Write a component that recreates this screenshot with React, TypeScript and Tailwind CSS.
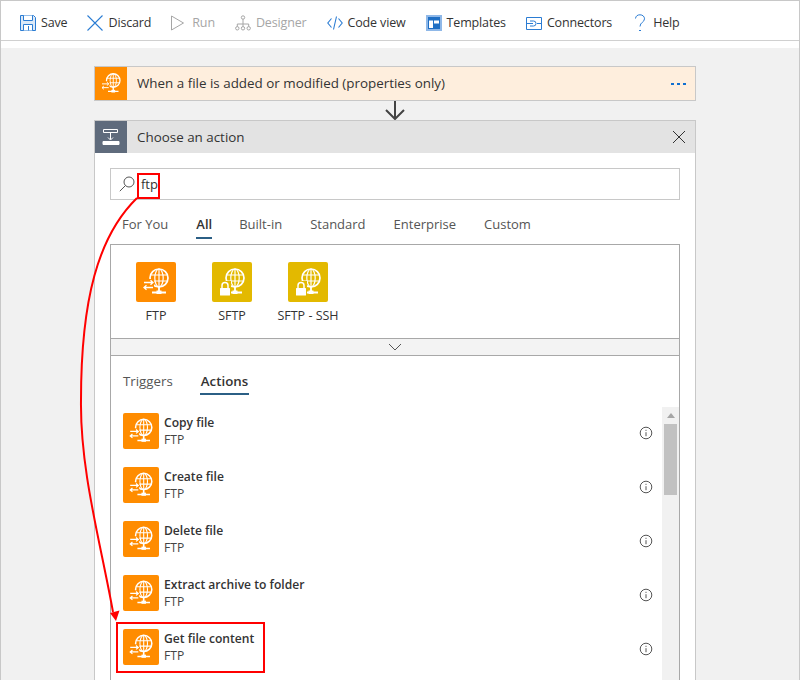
import { ReactNode } from 'react';

const actions = ['Copy file', 'Create file', 'Delete file', 'Extract archive to folder', 'Get file content'];

function Globe({ lock, bg = '#ff8c00' }: { lock?: boolean; bg?: string }) {
  return (
    <svg viewBox="0 0 40 40" className="w-full h-full" fill="none" stroke="#fff" strokeWidth={1.2}>
      <circle cx="23" cy="16" r="9" strokeWidth={1.7} />
      <ellipse cx="23" cy="16" rx="4.2" ry="9" />
      <path d="M23 7v18M14.500 13h17M14.500 19h17" />
      <path d="M23 25v4M16 30.500h14" strokeWidth={1.8} />
      <rect x="20.500" y="28.500" width="5" height="3.500" fill="#fff" stroke="none" />
      {lock ? (
        <g>
          <rect x="7" y="19" width="12" height="15" fill={bg} stroke="none" />
          <path d="M10 26v-2.500a3 3 0 0 1 6 0V26" strokeWidth={1.500} />
          <rect x="8" y="26" width="10" height="7.500" rx="0.5" fill="#fff" stroke="none" />
        </g>
      ) : (
        <g strokeWidth={1.300}>
          <rect x="6.500" y="17" width="11.500" height="11" fill={bg} stroke="none" />
          <path d="M8 20.500h9M14.500 18.300l2.500 2.200-2.500 2.200" />
          <path d="M17 25.500H8M10.500 23.300L8 25.500l2.500 2.200" />
        </g>
      )}
    </svg>
  );
}

function ToolItem({ icon, label, muted }: { icon: ReactNode; label: string; muted?: boolean }) {
  return (
    <div className={`flex items-center gap-[5px] ${muted ? 'text-[#a6a6a6]' : 'text-[#333]'}`}>
      {icon}
      <span>{label}</span>
    </div>
  );
}

function InfoIcon() {
  return (
    <svg viewBox="0 0 14 14" className="w-[14px] h-[14px]" fill="none" stroke="#555" strokeWidth={1}>
      <circle cx="7" cy="7" r="5.800" />
      <path d="M7 6.200v4M7 3.800v1.100" />
    </svg>
  );
}

export default function App() {
  return (
    <div className="relative w-[800px] h-[680px] overflow-hidden bg-[#f1f1f1] border-x border-[#c8c8c8] text-[13px] font-['Open_Sans','Noto_Sans',sans-serif] text-[#333]">
      <div className="bg-white h-[48px] border-t border-[#c8c8c8]">
        <div className="h-[40px] border-b border-[#d0d0d0] flex items-center pl-[19px] pt-[5px] gap-[20px] text-[12.500px] tracking-[-0.15px]">
          <ToolItem
            label="Save"
            icon={
              <svg viewBox="0 0 16 16" className="w-[16px] h-[16px]" fill="#dbe9f8" stroke="#2b7cd3" strokeWidth={1}>
                <path d="M.5.5h13l2 2v13H.5z" />
                <path d="M3.500.5v5h9v-5M3.500 15.500v-6h9v6" fill="#fff" />
                <path d="M8.500 11v4.500" />
              </svg>
            }
          />
          <ToolItem
            label="Discard"
            icon={
              <svg viewBox="0 0 16 16" className="w-[16px] h-[16px]" fill="none" stroke="#2b7cd3" strokeWidth={1.100}>
                <path d="M.5.5l15 15M15.500.5l-15 15" />
              </svg>
            }
          />
          <ToolItem
            muted
            label="Run"
            icon={
              <svg viewBox="0 0 16 16" className="w-[16px] h-[16px]" fill="none" stroke="#a6a6a6" strokeWidth={1}>
                <path d="M.5 1l12 7-12 7z" />
              </svg>
            }
          />
          <ToolItem
            muted
            label="Designer"
            icon={
              <svg viewBox="0 0 16 16" className="w-[16px] h-[16px]" fill="none" stroke="#a6a6a6" strokeWidth={1}>
                <circle cx="8" cy="2.500" r="1.700" />
                <circle cx="2.300" cy="13.300" r="1.700" />
                <circle cx="8" cy="13.300" r="1.700" />
                <circle cx="13.700" cy="13.300" r="1.700" />
                <path d="M8 4.200v7.400M2.300 11.600V9h11.400v2.600" />
              </svg>
            }
          />
          <ToolItem
            label="Code view"
            icon={
              <svg viewBox="0 0 16 14" className="w-[16px] h-[14px]" fill="none" stroke="#2b7cd3" strokeWidth={1.100}>
                <path d="M4.500 2.500L.8 7l3.700 4.500M11.500 2.500L15.200 7l-3.700 4.500M9.500.5l-3 13" />
              </svg>
            }
          />
          <ToolItem
            label="Templates"
            icon={
              <svg viewBox="0 0 16 16" className="w-[16px] h-[16px]">
                <rect width="16" height="16" fill="#8fb8e8" />
                <rect x="2" y="2" width="12" height="12" fill="#1f6fc4" />
                <rect x="3" y="5.500" width="4" height="7.500" fill="#fff" />
                <rect x="8" y="5.500" width="5" height="3" fill="#fff" />
              </svg>
            }
          />
          <ToolItem
            label="Connectors"
            icon={
              <svg viewBox="0 0 16 13" className="w-[16px] h-[13px]" fill="none" stroke="#2b7cd3" strokeWidth={1}>
                <path d="M.5.5h15v12H.5z" />
                <path d="M4 4h3.500a2.500 2.500 0 0 1 0 5H4M0 6.500h7M11 6.500h5" />
              </svg>
            }
          />
          <ToolItem
            label="Help"
            icon={
              <svg viewBox="0 0 16 18" className="w-[16px] h-[18px]" fill="none" stroke="#2b7cd3" strokeWidth={1}>
                <path d="M3.500 4.500C3.800 2 5.500.8 8 .8c2.700 0 4.500 1.700 4.500 4 0 3.500-4.500 3.500-4.500 7.700" />
                <path d="M7 16.500h2" />
              </svg>
            }
          />
        </div>
      </div>

      <div className="w-[602px] ml-[93px] mt-[18px]">
        <div className="h-[35px] flex items-center bg-[#feeedd] border border-[#c8c8c8]">
          <div className="w-[32px] h-[33px] bg-[#ff8c00] p-[1px] shrink-0">
            <Globe />
          </div>
          <span className="ml-[10px] text-[13.400px]">When a file is added or modified (properties only)</span>
          <div className="ml-auto mr-[9px] flex gap-[3px]">
            <i className="w-[3px] h-[2px] bg-[#0f6fd0]" />
            <i className="w-[3px] h-[2px] bg-[#0f6fd0]" />
            <i className="w-[3px] h-[2px] bg-[#0f6fd0]" />
          </div>
        </div>

        <div className="h-[19px] flex justify-center">
          <svg viewBox="0 0 22 19" className="w-[22px] h-[19px]" fill="none" stroke="#444" strokeWidth={2}>
            <path d="M11 0v17M2 9l9 9 9-9" />
          </svg>
        </div>

        <div className="bg-white border border-[#c8c8c8] h-[600px]">
          <div className="h-[32px] bg-[#e3e3e3] flex items-center">
            <div className="w-[32px] h-[32px] bg-[#5f6b7c] flex items-center justify-center shrink-0">
              <svg viewBox="0 0 18 18" className="w-[18px] h-[18px]" fill="none" stroke="#fff" strokeWidth={1}>
                <path d="M1.500 1.500h14v3h-14zM8.500 4.500v7M6 9.500l2.500 2.500 2.500-2.500" />
                <path d="M1 13.500h16v3H1z" fill="#fff" />
              </svg>
            </div>
            <span className="ml-[10px] text-[13.400px]">Choose an action</span>
            <svg viewBox="0 0 14 14" className="w-[14px] h-[14px] ml-auto mr-[9px]" fill="none" stroke="#333" strokeWidth={1}>
              <path d="M1 1l12 12M13 1L1 13" />
            </svg>
          </div>

          <div className="px-[15px]">
            <div className="mt-[15px] h-[32px] border border-[#c8c8c8] flex items-center pl-[8px]">
              <svg viewBox="0 0 16 16" className="w-[16px] h-[16px]" fill="none" stroke="#555" strokeWidth={1}>
                <circle cx="10" cy="6" r="5" />
                <path d="M6.500 9.500L.8 15.200" />
              </svg>
              <span className="ml-[6px] pt-[2px] text-[13px]">ftp</span>
            </div>

            <div className="h-[44px] pl-[12px] pt-[5px] flex items-center gap-[28px] text-[13px] text-[#555]">
              <span>For You</span>
              <span className="relative font-semibold text-[#333]">
                All
                <i className="absolute left-0 right-0 -bottom-[5px] h-[2px] bg-[#2b5f85]" />
              </span>
              <span className="-ml-[1px]">Built-in</span>
              <span>Standard</span>
              <span>Enterprise</span>
              <span>Custom</span>
            </div>

            <div className="border border-[#a8a8a8] h-[500px]">
              <div className="h-[93px] pt-[17px] pl-[25px] flex gap-[36px]">
                {[
                  { label: 'FTP', color: 'bg-[#ff8c00]', bg: '#ff8c00', lock: false },
                  { label: 'SFTP', color: 'bg-[#e3b900]', bg: '#e3b900', lock: true },
                  { label: 'SFTP - SSH', color: 'bg-[#e3b900]', bg: '#e3b900', lock: true },
                ].map((c) => (
                  <div key={c.label} className="w-[40px] flex flex-col items-center">
                    <div className={`w-[40px] h-[40px] rounded-[2px] shrink-0 ${c.color}`}>
                      <Globe lock={c.lock} bg={c.bg} />
                    </div>
                    <span className="mt-[5px] text-[12.500px] whitespace-nowrap">{c.label}</span>
                  </div>
                ))}
              </div>
              <div className="h-[18px] bg-[#f3f3f3] border-y border-[#a8a8a8] flex items-center justify-center">
                <svg viewBox="0 0 14 8" className="w-[14px] h-[8px]" fill="none" stroke="#555" strokeWidth={1}>
                  <path d="M1 1l6 6 6-6" />
                </svg>
              </div>
              <div className="h-[51px] pl-[12px] flex items-center gap-[28px] text-[13.300px] text-[#555]">
                <span>Triggers</span>
                <span className="relative font-semibold text-[#333]">
                  Actions
                  <i className="absolute -left-[1px] -right-[1px] -bottom-[4px] h-[2px] bg-[#2b5f85]" />
                </span>
              </div>
              <div className="flex">
                <div className="flex-1 pl-[12px] pt-[6px]">
                  {actions.map((a) => (
                    <div key={a} className="h-[54px] flex">
                      <div className="w-[36px] h-[36px] rounded-[2px] bg-[#ff8c00] shrink-0">
                        <Globe />
                      </div>
                      <div className="ml-[5px] pt-[1px] leading-[17px] text-[12.100px]">
                        <div className="font-semibold text-[#333]">{a}</div>
                        <div className="text-[#444]">FTP</div>
                      </div>
                      <div className="ml-auto mr-[9px] mt-[13px]">
                        <InfoIcon />
                      </div>
                    </div>
                  ))}
                </div>
                <div className="w-[17px] h-[300px] bg-[#f1f1f1] flex flex-col items-center shrink-0">
                  <svg viewBox="0 0 8 5" className="w-[8px] h-[5px] mt-[6px]" fill="#a6a6a6">
                    <path d="M4 0l4 5H0z" />
                  </svg>
                  <div className="w-[13px] h-[71px] mt-[6px] bg-[#c1c1c1]" />
                </div>
              </div>
            </div>
          </div>
        </div>
      </div>

      <div className="absolute left-[136px] top-[173px] w-[23px] h-[26px] border-2 border-[#f00]" />
      <div className="absolute left-[115px] top-[622px] w-[149px] h-[51px] border-2 border-[#f00]" />
      <svg viewBox="0 0 800 680" className="absolute -left-[1px] top-0 w-[800px] h-[680px] pointer-events-none" fill="none">
        <path d="M137 198C98 236 81 300 81 400C80 470 100 540 113 612" stroke="#f00" strokeWidth={2} />
        <path d="M116 621L110 613L119.500 610.500z" fill="#f00" />
      </svg>
    </div>
  );
}
